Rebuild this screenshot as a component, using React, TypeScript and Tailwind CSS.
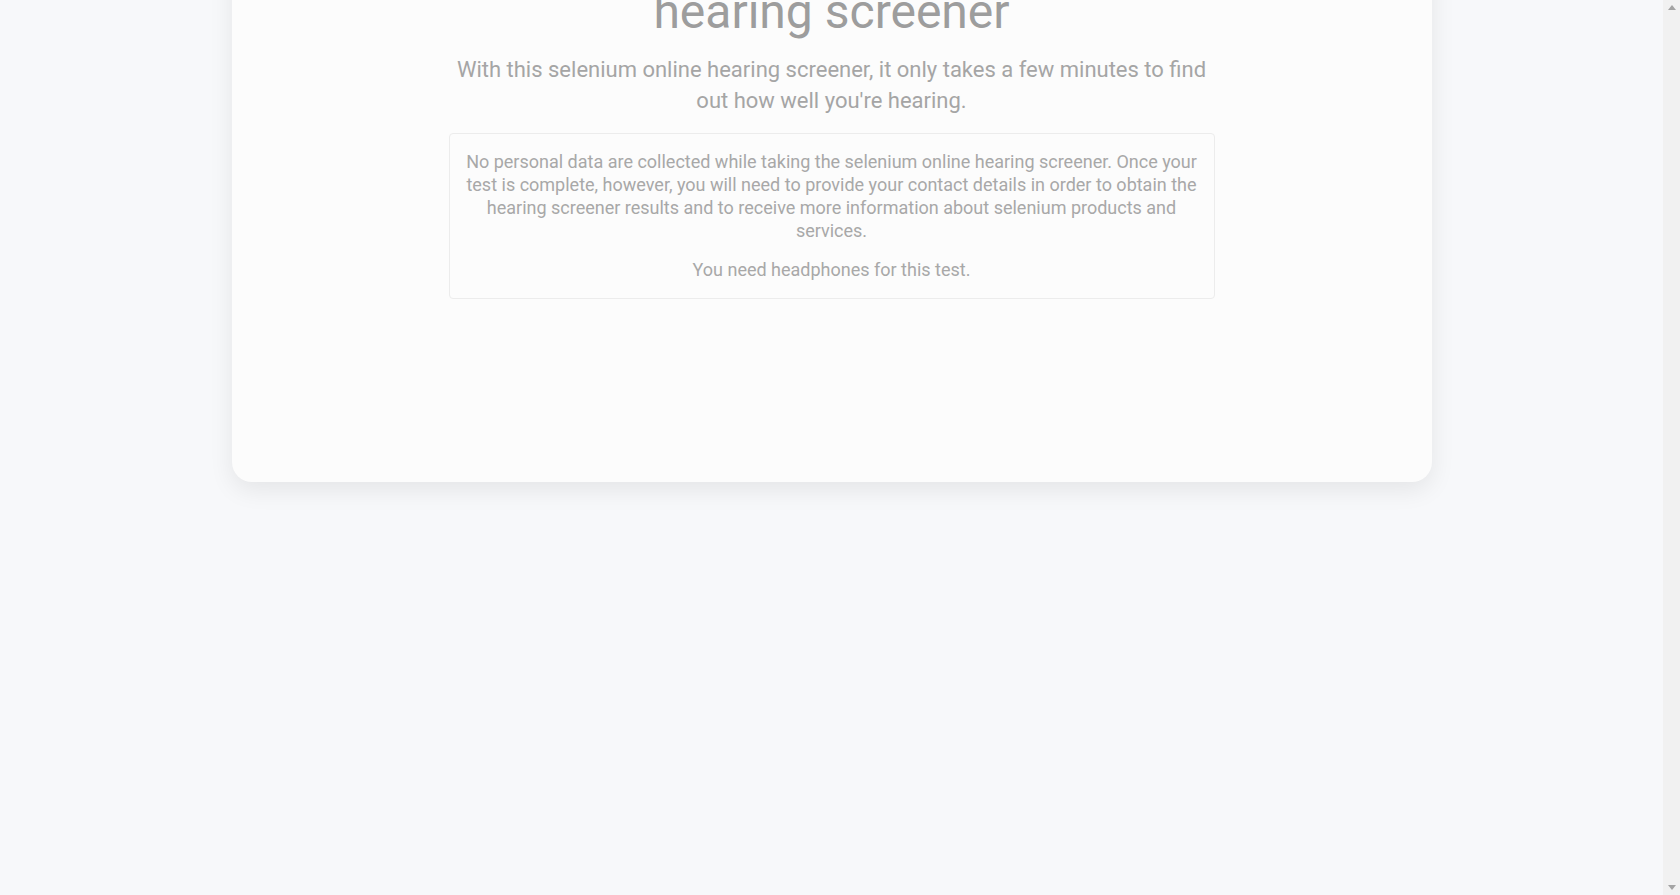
export default function App() {
  return (
    <div className="flex h-screen bg-[#f7f8fa] font-['Roboto','Liberation_Sans',sans-serif]">
      <div className="min-w-0 flex-1 overflow-hidden">
        {/* card, page is scrolled so the top of the title is cut off */}
        <div className="mx-auto -mt-[57px] w-[1200px] rounded-b-[20px] bg-[#fcfcfc] px-10 pt-10 pb-[183px] shadow-[0_8px_24px_rgba(0,0,0,0.08)]">
          <div className="mx-auto flex w-[766px] flex-col items-center text-center">
            <h1 className="text-[48px] leading-[1.2] font-normal text-[#9d9d9d]">hearing screener</h1>
            <p className="mt-[13px] text-[22px] leading-[31px] text-[#a5a5a5]">
              With this selenium online hearing screener, it only takes a few minutes to find out how well you're hearing.
            </p>
            <div className="mt-[17px] w-full rounded border border-[#ececec] px-4 pt-4 pb-[17px] text-[18px] leading-[23px] text-[#a8a8a8]">
              <p>
                No personal data are collected while taking the selenium online hearing screener. Once your test is complete, however, you will need to provide your contact details in order to obtain the hearing screener results and to receive more information about selenium products and services.
              </p>
              <p className="mt-4">You need headphones for this test.</p>
            </div>
          </div>
        </div>
      </div>

      {/* scrollbar */}
      <div className="flex w-[17px] shrink-0 flex-col items-center justify-between bg-[#f1f1f1] py-[5px]">
        <svg width="8" height="5" viewBox="0 0 8 5">
          <path d="M4 0 L8 5 L0 5 Z" fill="#a3a3a3" />
        </svg>
        <svg width="8" height="5" viewBox="0 0 8 5">
          <path d="M0 0 L8 0 L4 5 Z" fill="#a3a3a3" />
        </svg>
      </div>
    </div>
  );
}
